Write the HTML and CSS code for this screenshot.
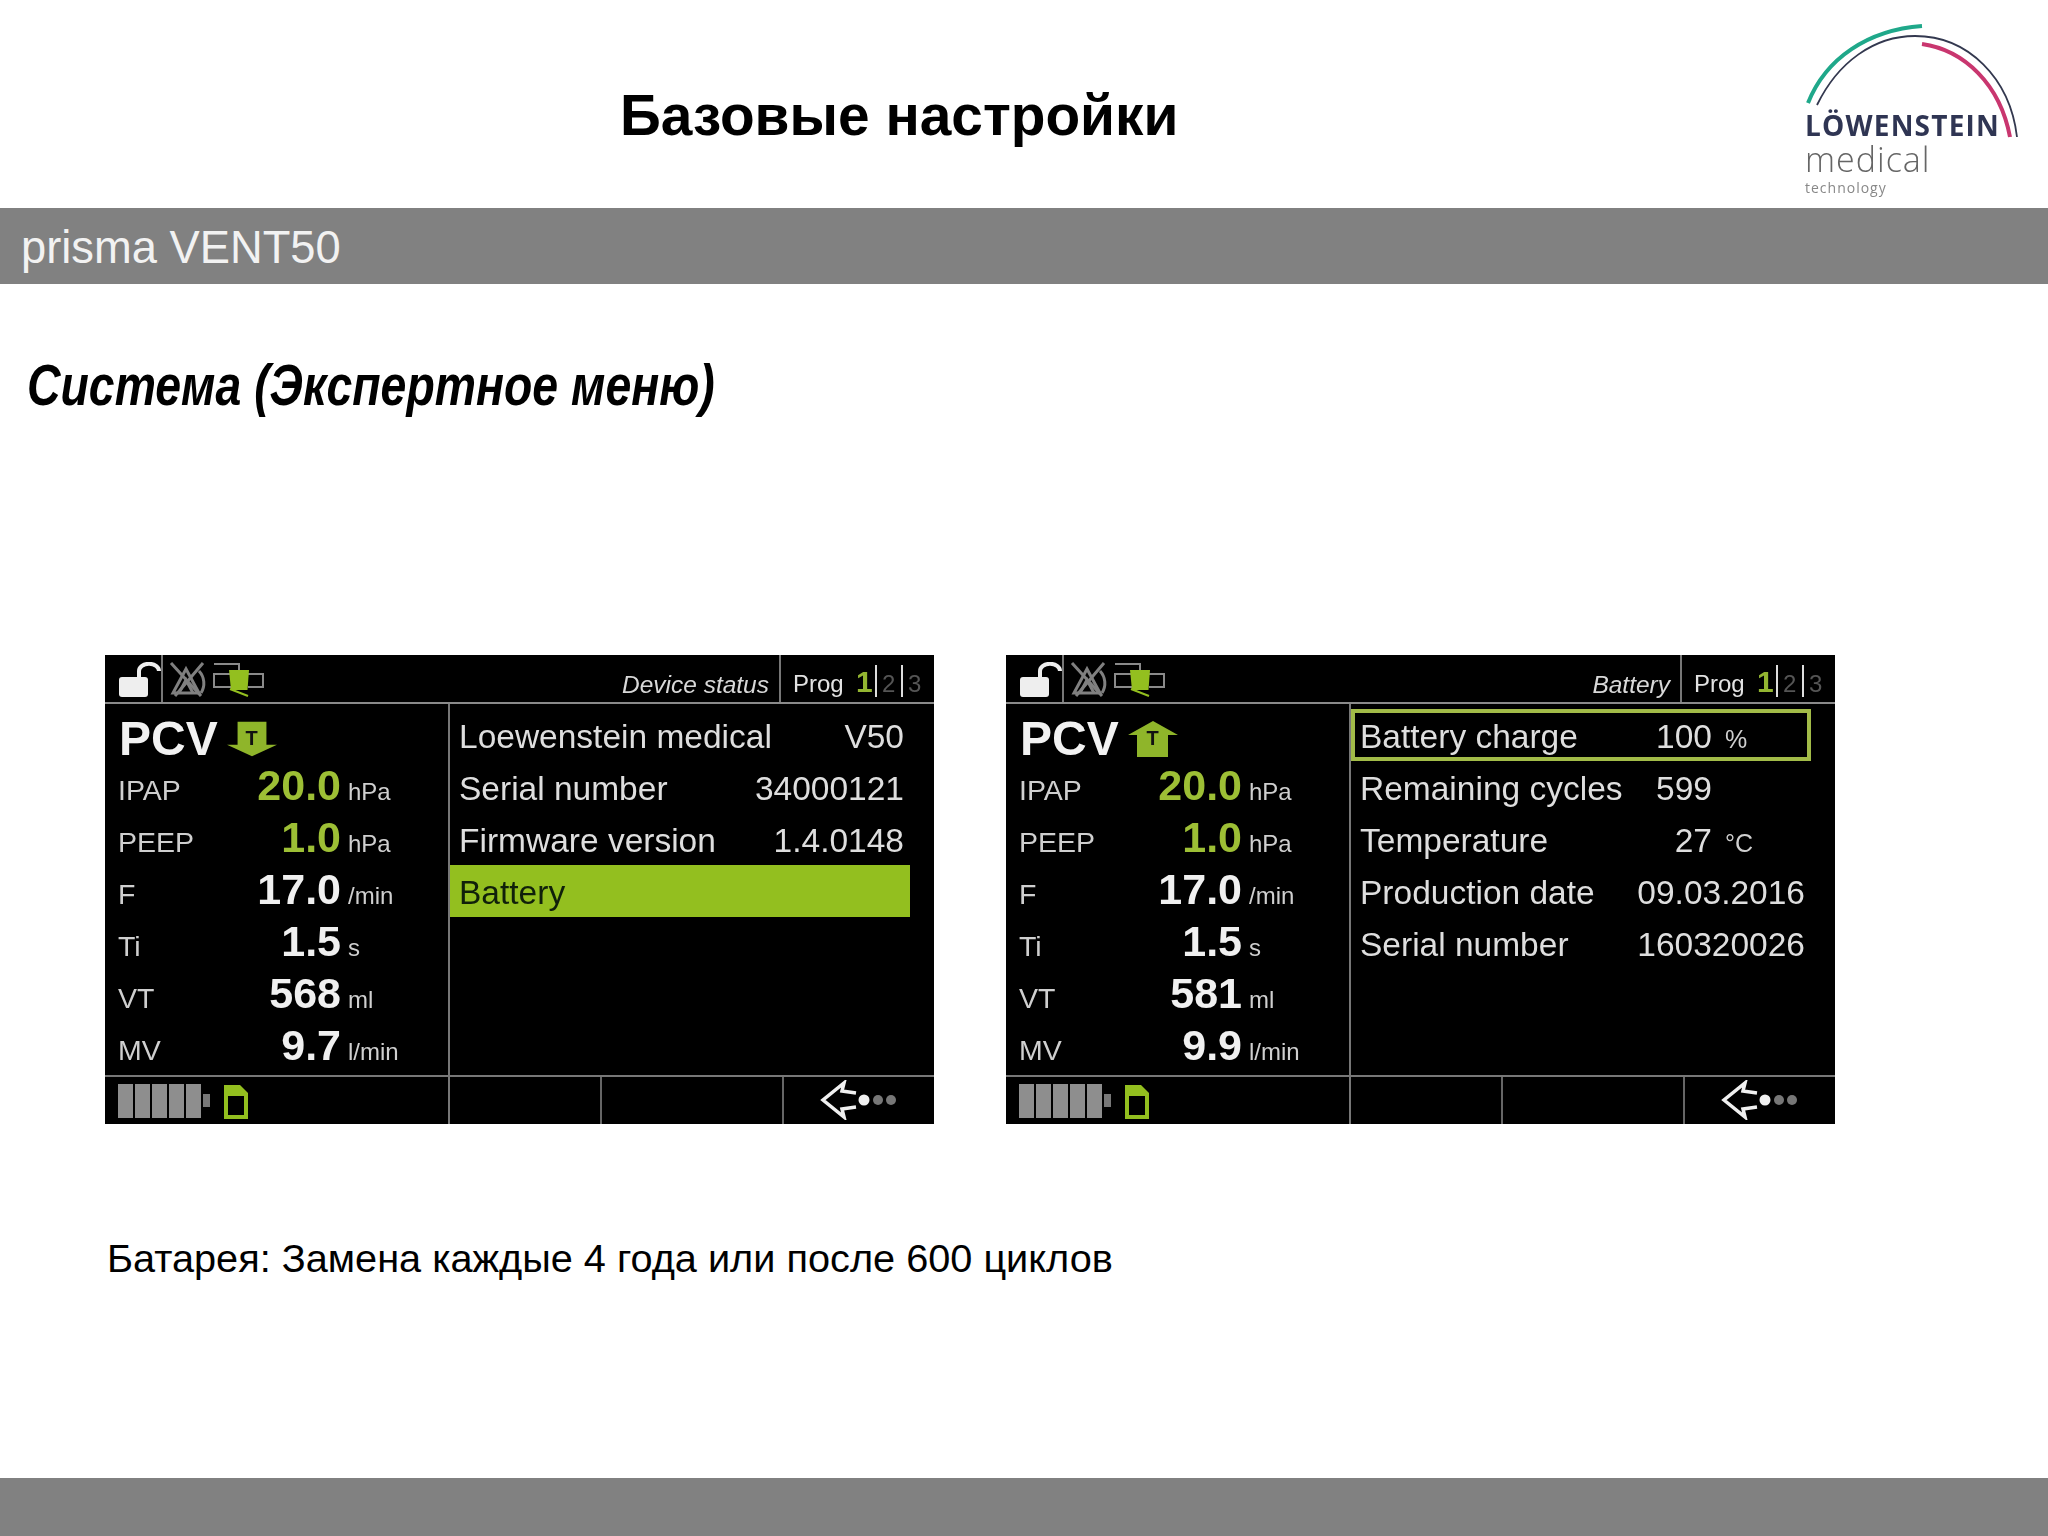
FILE: index.html
```html
<!DOCTYPE html>
<html lang="ru">
<head>
<meta charset="utf-8">
<title>Базовые настройки</title>
<link rel="stylesheet" href="styles.css">
</head>
<body>
<svg class="sprite" xmlns="http://www.w3.org/2000/svg" aria-hidden="true">
  <symbol id="i-lock" viewBox="0 0 44 38">
    <rect x="1" y="15" width="29" height="20" rx="3" fill="#eee"/>
    <path d="M21 15V9a9 6.500 0 0 1 20 0" fill="none" stroke="#eee" stroke-width="4"/>
  </symbol>
  <symbol id="i-alarm" viewBox="0 0 40 38">
    <g fill="none" stroke="#808080" stroke-width="3">
      <path d="M4 32 17 8l13 24Z"/>
      <path d="M10 32 17 19l7 13"/>
      <path d="M2 2l30 33M34 2 6 35"/>
      <path d="M30 10a18 18 0 0 1 2 22"/>
    </g>
  </symbol>
  <symbol id="i-device" viewBox="0 0 52 38">
    <path d="M2 3h25v6" fill="none" stroke="#8a8a8a" stroke-width="2"/>
    <path d="M20 13H2v13h18M36 13h15v13H36" fill="none" stroke="#8a8a8a" stroke-width="2"/>
    <path d="M17 9h20l-1.500 20H19Z" fill="#93bf1f"/>
    <path d="M18 28l18 7" fill="none" stroke="#93bf1f" stroke-width="2"/>
  </symbol>
  <symbol id="i-down" viewBox="0 0 52 36">
    <path d="M11 0h30v24h11L26 36 0 24h11Z" fill="#8fb52a"/>
  </symbol>
  <symbol id="i-up" viewBox="0 0 50 36">
    <path d="M25 0l25 14H40v22H9V14H0Z" fill="#8fb52a"/>
  </symbol>
  <symbol id="i-sd" viewBox="0 0 26 36">
    <path d="M1 1h16l8 8v26H1Z" fill="#93bf1f"/>
    <rect x="5" y="12" width="16" height="19" fill="#000"/>
  </symbol>
  <symbol id="i-back" viewBox="0 0 80 40">
    <path d="M38 13 24 11l2-8L5 20l21 17-2-8 14-2" fill="none" stroke="#f0f0f0" stroke-width="3.500" stroke-linejoin="miter"/>
    <circle cx="46" cy="20" r="5.500" fill="#f0f0f0"/>
    <circle cx="60" cy="20" r="5" fill="#777"/>
    <circle cx="73" cy="20" r="5" fill="#777"/>
  </symbol>
</svg>

<div class="page">
  <header class="top">
    <h1 class="title">Базовые настройки</h1>
    <svg class="logo" viewBox="1800 20 230 180" xmlns="http://www.w3.org/2000/svg" role="img" aria-label="Löwenstein medical technology">
      <path d="M1808 103C1826 58 1868 30 1922 26" fill="none" stroke="#1fa88a" stroke-width="4"/>
      <path d="M1817 105C1838 62 1874 36 1915 36C1968 36 2010 78 2017 137" fill="none" stroke="#33384f" stroke-width="1.800"/>
      <path d="M1922 44C1964 50 2000 84 2010 137" fill="none" stroke="#c9366f" stroke-width="4"/>
      <text class="logo-name" x="1805" y="136">LÖWENSTEIN</text>
      <text class="logo-sub" x="1805" y="172">medical</text>
      <text class="logo-tech" x="1805" y="193">technology</text>
    </svg>
  </header>

  <div class="band">prisma VENT50</div>

  <h2 class="heading">Система (Экспертное меню)</h2>

  <section class="screens">
    <article class="screen">
      <div class="s-top">
        <div class="lock-cell"><svg class="ic-lock"><use href="#i-lock"/></svg></div>
        <div class="icons">
          <svg class="ic-alarm"><use href="#i-alarm"/></svg>
          <svg class="ic-device"><use href="#i-device"/></svg>
        </div>
        <div class="status">Device status</div>
        <div class="prog"><span class="prog-label">Prog</span><span class="p-on">1</span><span class="p-off">2</span><span class="p-off">3</span></div>
      </div>
      <div class="s-body">
        <div class="params">
          <div class="mode"><span class="mode-name">PCV</span><span class="mode-badge"><svg class="ic-arrow"><use href="#i-down"/></svg><span class="mode-t">T</span></span></div>
          <div class="param"><span class="p-name">IPAP</span><span class="p-val green">20.0</span><span class="p-unit">hPa</span></div>
          <div class="param"><span class="p-name">PEEP</span><span class="p-val green">1.0</span><span class="p-unit">hPa</span></div>
          <div class="param"><span class="p-name">F</span><span class="p-val">17.0</span><span class="p-unit">/min</span></div>
          <div class="param"><span class="p-name">Ti</span><span class="p-val">1.5</span><span class="p-unit">s</span></div>
          <div class="param"><span class="p-name">VT</span><span class="p-val">568</span><span class="p-unit">ml</span></div>
          <div class="param"><span class="p-name">MV</span><span class="p-val">9.7</span><span class="p-unit">l/min</span></div>
        </div>
        <div class="menu">
          <div class="item"><span>Loewenstein medical</span><span>V50</span></div>
          <div class="item"><span>Serial number</span><span>34000121</span></div>
          <div class="item"><span>Firmware version</span><span>1.4.0148</span></div>
          <div class="item item-active"><span>Battery</span></div>
        </div>
      </div>
      <div class="s-foot">
        <div class="f-state">
          <div class="batt"><i></i><i></i><i></i><i></i><i></i></div><div class="batt-nub"></div>
          <svg class="ic-sd"><use href="#i-sd"/></svg>
        </div>
        <div class="f-soft"></div>
        <div class="f-soft f-wide"></div>
        <div class="f-back"><svg class="ic-back"><use href="#i-back"/></svg></div>
      </div>
    </article>

    <article class="screen">
      <div class="s-top">
        <div class="lock-cell"><svg class="ic-lock"><use href="#i-lock"/></svg></div>
        <div class="icons">
          <svg class="ic-alarm"><use href="#i-alarm"/></svg>
          <svg class="ic-device"><use href="#i-device"/></svg>
        </div>
        <div class="status">Battery</div>
        <div class="prog"><span class="prog-label">Prog</span><span class="p-on">1</span><span class="p-off">2</span><span class="p-off">3</span></div>
      </div>
      <div class="s-body">
        <div class="params">
          <div class="mode"><span class="mode-name">PCV</span><span class="mode-badge"><svg class="ic-arrow"><use href="#i-up"/></svg><span class="mode-t">T</span></span></div>
          <div class="param"><span class="p-name">IPAP</span><span class="p-val green">20.0</span><span class="p-unit">hPa</span></div>
          <div class="param"><span class="p-name">PEEP</span><span class="p-val green">1.0</span><span class="p-unit">hPa</span></div>
          <div class="param"><span class="p-name">F</span><span class="p-val">17.0</span><span class="p-unit">/min</span></div>
          <div class="param"><span class="p-name">Ti</span><span class="p-val">1.5</span><span class="p-unit">s</span></div>
          <div class="param"><span class="p-name">VT</span><span class="p-val">581</span><span class="p-unit">ml</span></div>
          <div class="param"><span class="p-name">MV</span><span class="p-val">9.9</span><span class="p-unit">l/min</span></div>
        </div>
        <div class="menu">
          <div class="item item-focus"><span>Battery charge</span><span class="v-unit"><span>100</span><small>%</small></span></div>
          <div class="item"><span>Remaining cycles</span><span class="v-unit"><span>599</span><small></small></span></div>
          <div class="item"><span>Temperature</span><span class="v-unit"><span>27</span><small>°C</small></span></div>
          <div class="item"><span>Production date</span><span>09.03.2016</span></div>
          <div class="item"><span>Serial number</span><span>160320026</span></div>
        </div>
      </div>
      <div class="s-foot">
        <div class="f-state">
          <div class="batt"><i></i><i></i><i></i><i></i><i></i></div><div class="batt-nub"></div>
          <svg class="ic-sd"><use href="#i-sd"/></svg>
        </div>
        <div class="f-soft"></div>
        <div class="f-soft f-wide"></div>
        <div class="f-back"><svg class="ic-back"><use href="#i-back"/></svg></div>
      </div>
    </article>
  </section>

  <p class="note">Батарея: Замена каждые 4 года или после 600 циклов</p>

  <footer class="bottom"></footer>
</div>
</body>
</html>
```

FILE: styles.css
```css
* { box-sizing: border-box; }
html, body { margin: 0; padding: 0; background: #fff; }
body { font-family: "Liberation Sans", Arial, sans-serif; color: #000; }
.sprite { position: absolute; width: 0; height: 0; overflow: hidden; }

.page { width: 2048px; height: 1536px; display: flex; flex-direction: column; overflow: hidden; }

.top { height: 208px; flex: none; display: flex; align-items: flex-start; }
.title { margin: 85px 0 0 620px; font-size: 56.800px; line-height: 62px; font-weight: 700; }
.logo { width: 230px; height: 180px; margin: 20px 18px 0 auto; filter: blur(0.7px); }
.logo-name { font-family: "Open Sans", sans-serif; font-size: 28px; font-weight: 700; fill: #2f3553; letter-spacing: 1.200px; }
.logo-sub { font-family: "Open Sans", sans-serif; font-size: 34px; font-weight: 300; fill: #666; letter-spacing: 1px; }
.logo-tech { font-family: "Open Sans", sans-serif; font-size: 14px; fill: #888; letter-spacing: 1px; }

.band { height: 76px; flex: none; background: #818181; color: #f2f2f2; font-size: 45.300px; line-height: 79px; padding-left: 21px; }

.heading { margin: 70px 0 0 27px; font-family: "Liberation Sans", sans-serif; font-size: 58px; line-height: 61px; font-weight: 700; font-style: italic; height: 60px; transform: scaleX(0.8); transform-origin: left center; white-space: nowrap; }

.screens { display: flex; gap: 72px; margin: 241px 0 0 105px; flex: none; }

.screen { width: 829px; height: 469px; background: #000; color: #ddd; display: flex; flex-direction: column; filter: blur(0.5px); }

.s-top { height: 49px; flex: none; display: flex; border-bottom: 2px solid #8a8a8a; }
.lock-cell { width: 58px; flex: none; border-right: 2px solid #777; padding: 7px 0 0 13px; }
.ic-lock { width: 44px; height: 38px; display: block; }
.icons { display: flex; gap: 3px; padding: 6px 0 0 6px; }
.ic-alarm { width: 40px; height: 38px; display: block; }
.ic-device { width: 52px; height: 38px; display: block; }
.status { margin-left: auto; padding: 0 10px 0 0; font-size: 24.500px; line-height: 60px; height: 47px; font-style: italic; color: #d8d8d8; }
.prog { width: 155px; flex: none; border-left: 2px solid #777; display: flex; align-items: flex-start; padding: 10px 0 0 12px; font-size: 24px; color: #e2e2e2; }
.prog-label { width: 63px; height: 32px; line-height: 38px; }
.p-on { width: 21px; height: 32px; font-size: 30px; font-weight: 700; line-height: 34px; color: #93b531; border-right: 2px solid #ddd; }
.p-off { width: 26px; height: 32px; line-height: 38px; color: #555; padding-left: 5px; border-right: 2px solid #ddd; }
.p-off:last-child { border-right: 0; }

.s-body { flex: 1; min-height: 0; display: flex; }

.params { width: 345px; flex: none; border-right: 2px solid #777; padding-top: 8px; }
.mode { height: 52px; display: flex; align-items: baseline; padding-left: 14px; }
.mode-name { font-size: 48px; line-height: 53px; font-weight: 700; color: #f2f2f2; }
.mode-badge { position: relative; width: 50px; height: 36px; margin-left: 9px; align-self: flex-start; margin-top: 9px; }
.ic-arrow { width: 50px; height: 36px; display: block; }
.mode-t { position: absolute; inset: 4px 0 0 0; text-align: center; font-size: 20px; line-height: 26px; font-weight: 700; color: #111; }

.param { height: 52px; display: grid; grid-template-columns: 90px 133px auto; align-items: baseline; padding-left: 13px; line-height: 43px; }
.p-name { font-size: 28.500px; color: #cfcfcf; }
.p-val { font-size: 43px; font-weight: 700; color: #f0f0f0; text-align: right; }
.p-val.green { color: #9dbf35; }
.p-unit { font-size: 24px; color: #cfcfcf; margin-left: 7px; }

.menu { flex: 1; padding: 5px 24px 0 0; min-width: 0; font-size: 33.500px; }
.item { height: 52px; line-height: 55px; padding: 0 6px 0 9px; display: flex; justify-content: space-between; color: #dedede; }
.item-active { background: #93bf1f; color: #10200a; }
.item-focus { box-shadow: inset 0 0 0 4px #a2bb48; }
.v-unit { display: flex; align-items: baseline; }
.v-unit small { width: 93px; padding-left: 13px; font-size: 25px; color: #cfcfcf; }

.s-foot { height: 49px; flex: none; display: flex; border-top: 2px solid #777; }
.f-state { width: 345px; flex: none; border-right: 2px solid #777; display: flex; align-items: flex-start; padding: 7px 0 0 13px; }
.batt { display: flex; gap: 2px; height: 34px; width: 83px; }
.batt i { flex: 1; background: #8e8e8e; }
.batt-nub { width: 7px; height: 13px; margin: 10px 0 0 2px; background: #777; }
.ic-sd { width: 26px; height: 36px; margin-left: 13px; display: block; }
.f-soft { width: 152px; flex: none; border-right: 2px solid #666; }
.f-soft.f-wide { width: 182px; }
.f-back { flex: 1; padding: 3px 0 0 34px; }
.ic-back { width: 80px; height: 40px; display: block; }

.note { margin: 112px 0 0 107px; font-size: 39.700px; line-height: 44px; }

.bottom { margin-top: auto; height: 58px; flex: none; background: #818181; }
```
